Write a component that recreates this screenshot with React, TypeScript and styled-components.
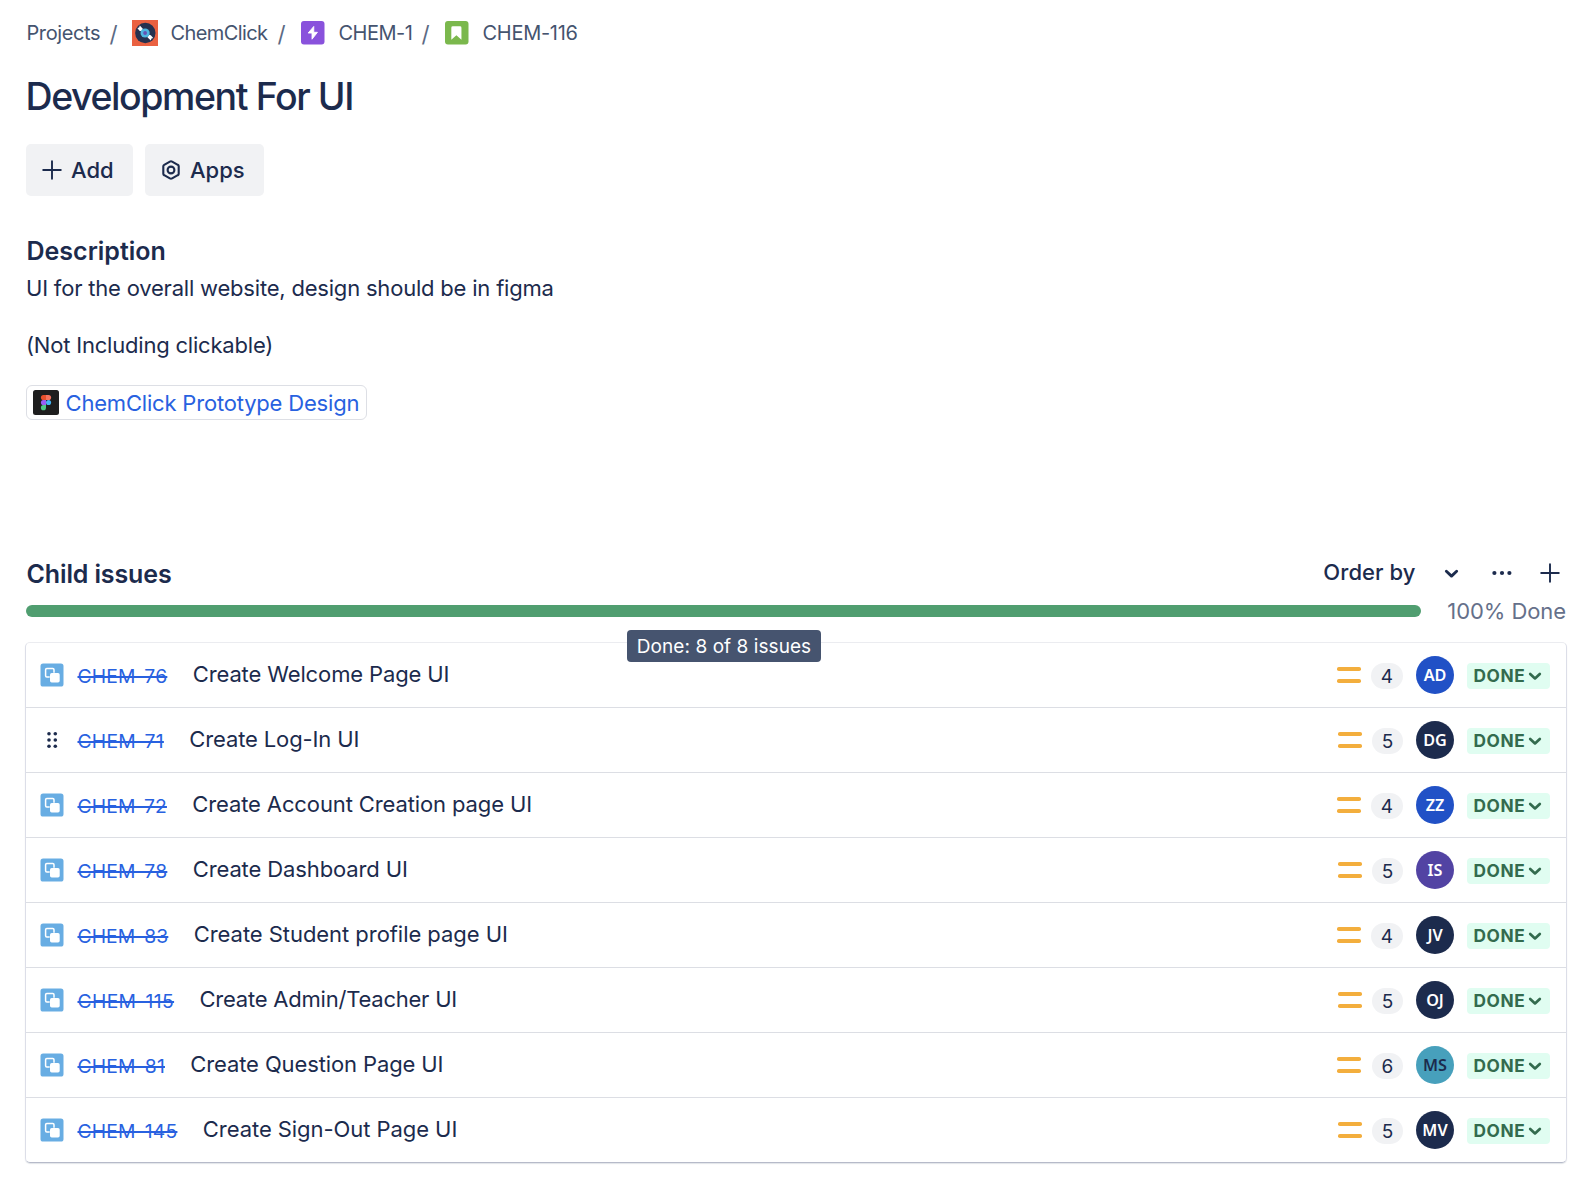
import React from "react";
import styled, { createGlobalStyle } from "styled-components";

const Global = createGlobalStyle`
  * { box-sizing: border-box; }
  body {
    margin: 0;
    background: #fff;
    color: #1c2b4d;
    font-family: Inter, "Liberation Sans", sans-serif;
    font-feature-settings: "calt" 0;
  }
  svg { display: block; flex: none; }
`;

const Page = styled.main`
  width: 1592px;
  height: 1184px;
  padding: 20px 26px 0;
  display: flex;
  flex-direction: column;
  overflow: hidden;
`;
const Crumbs = styled.nav`
  height: 26px;
  padding-left: 0.5px;
  display: flex;
  align-items: center;
  font-size: 20px;
  color: #45546f;
  white-space: nowrap;
`;
const Crumb = styled.a<{ $gap?: number }>`
  display: flex;
  align-items: center;
  gap: ${(p) => p.$gap ?? 0}px;
`;
const Label = styled.span<{ $tracking?: number }>`
  letter-spacing: ${(p) => p.$tracking ?? -0.4}px;
`;
const Slash = styled.span<{ $before: number; $after: number }>`
  width: 7px;
  margin: 1px ${(p) => p.$after}px 0 ${(p) => p.$before}px;
  color: #5c6a84;
  font-size: 22.5px;
`;
const Title = styled.h1`
  margin: 29px 0 0 -0.5px;
  font-size: 37.5px;
  line-height: 44px;
  font-weight: 530;
  letter-spacing: -1.42px;
`;
const Actions = styled.div`
  margin-top: 25px;
  display: flex;
  gap: 12px;
`;
const Action = styled.button<{ $w: number }>`
  width: ${(p) => p.$w}px;
  height: 52px;
  padding: 0 0 0 16px;
  display: flex;
  align-items: center;
  gap: 9px;
  border: 0;
  border-radius: 5px;
  background: #f1f2f4;
  color: inherit;
  font: 500 22px/28px Inter, sans-serif;
`;
const Section = styled.section<{ $top: number }>`
  margin-top: ${(p) => p.$top}px;
`;
const Heading = styled.h2`
  margin: 0 0 0 0.5px;
  font-size: 25px;
  line-height: 30px;
  font-weight: 600;
`;
const Para = styled.p<{ $top: number }>`
  margin: ${(p) => p.$top}px 0 0;
  font-size: 22px;
  line-height: 28px;
  letter-spacing: -0.2px;
`;
const SmartLink = styled.a`
  margin-top: 26px;
  width: 341px;
  height: 35px;
  padding: 0 6px;
  display: flex;
  align-items: center;
  gap: 6.5px;
  border: 1px solid #dddfe5;
  border-radius: 6px;
  color: #2861e0;
  font-size: 22px;
  letter-spacing: -0.19px;
  white-space: nowrap;
`;
const Head = styled.div`
  height: 32px;
  display: flex;
  align-items: center;
  justify-content: space-between;
  letter-spacing: -0.13px;
`;
const Tools = styled.div`
  height: 30px;
  align-self: flex-start;
  padding-right: 6px;
  display: flex;
  align-items: center;
  letter-spacing: 0.06px;
`;
const OrderBy = styled.span`
  padding-bottom: 2px;
  margin-right: 28px;
  font-size: 22px;
  font-weight: 500;
`;
const ToolIcon = styled.span<{ $before: number }>`
  margin-left: ${(p) => p.$before}px;
`;
const Progress = styled.div`
  position: relative;
  margin-top: 7px;
  height: 28px;
  display: flex;
  align-items: center;
  justify-content: space-between;
`;
const Bar = styled.div`
  width: 1395px;
  height: 12px;
  border-radius: 6px;
  background: #509e70;
`;
const Percent = styled.span`
  color: #65708a;
  font-size: 22px;
  letter-spacing: -0.08px;
`;
const Tooltip = styled.div`
  position: absolute;
  z-index: 2;
  left: 601px;
  top: 33px;
  width: 194px;
  height: 32px;
  display: flex;
  align-items: center;
  justify-content: center;
  border-radius: 4px;
  background: #46546f;
  color: #fff;
  font-size: 19px;
  letter-spacing: 0.06px;
  white-space: nowrap;
`;
const List = styled.div`
  margin: 17px -1px 0;
  border-radius: 5px;
  border: 1px solid #dcdee8;
  border-top-color: #ebecf0;
  border-bottom-color: #b6bac9;
  box-shadow: 0 1px 1px rgba(9, 30, 66, 0.12);
`;
const Row = styled.div`
  height: 65px;
  padding: 0 16px 0 14px;
  display: flex;
  align-items: center;
  border-bottom: 1px solid #dcdee4;
  &:last-child {
    height: 64px;
    border-bottom: 0;
  }
`;
const Key = styled.a<{ $tracking?: number }>`
  margin: 2px 0 0 13.5px;
  color: #2861e0;
  font-size: 19.3px;
  letter-spacing: ${(p) => p.$tracking ?? 0.2}px;
  text-decoration: line-through;
  text-decoration-thickness: 1.5px;
`;
const Name = styled.span<{ $tracking?: number }>`
  margin: 0 0 2px 25.4px;
  flex: 1;
  font-size: 22px;
  letter-spacing: ${(p) => p.$tracking ?? -0.12}px;
`;
const Badge = styled.span<{ $w: number; $before: number }>`
  width: ${(p) => p.$w}px;
  height: 26px;
  margin: 2px 13px 0 ${(p) => p.$before}px;
  border-radius: 13px;
  display: grid;
  place-items: center;
  background: #f1f2f4;
  font-size: 19px;
`;
const Avatar = styled.span<{ $bg: string; $fg?: string }>`
  width: 38px;
  height: 38px;
  border-radius: 50%;
  display: grid;
  place-items: center;
  background: ${(p) => p.$bg};
  color: ${(p) => p.$fg ?? "#fff"};
  font: 560 16.2px/20px "Noto Sans", sans-serif;
`;
const Status = styled.span`
  width: 83px;
  height: 26px;
  margin: 2px 0 0 13px;
  padding: 0 8px 0 6.5px;
  display: flex;
  align-items: center;
  justify-content: space-between;
  border-radius: 4px;
  background: #e0fdf1;
  color: #336b4e;
`;
const StatusText = styled.span`
  font-size: 17.3px;
  line-height: 22px;
  font-weight: 700;
  letter-spacing: 0.6px;
`;

const PlusIcon = () => (
  <svg width="20" height="20" viewBox="0 0 20 20" stroke="currentColor" strokeWidth="1.9" strokeLinecap="round">
    <path d="M10 1.2v17.6M1.2 10h17.6" />
  </svg>
);

const AppsIcon = () => (
  <svg width="20" height="20" viewBox="0 0 20 20" fill="none" stroke="currentColor" strokeWidth="2.1" strokeLinejoin="round">
    <path d="M8.9 1.6 3.2 4.8a1.7 1.7 0 0 0-.9 1.5v7.4c0 .6.3 1.2.9 1.5l5.7 3.2c.7.4 1.5.4 2.2 0l5.7-3.2c.6-.3.9-.9.9-1.5V6.3c0-.6-.3-1.2-.9-1.5l-5.7-3.2a2.2 2.2 0 0 0-2.2 0z" />
    <circle cx="10" cy="10" r="3.4" />
  </svg>
);

const ProjectLogo = () => (
  <svg width="26" height="26" viewBox="0 0 26 26">
    <rect width="26" height="26" fill="#ea6141" />
    <circle cx="13.3" cy="13" r="10.2" fill="#26314f" />
    <path d="M5.4 8 7.2 7.4 7.8 5.4 11 9 9.4 11.2 7.4 10.8z" fill="#fff" />
    <path d="M21.2 18 19.5 18.6 18.8 20.6 15.4 17.2 17 14.8 18.8 15.2z" fill="#fff" />
    <circle cx="13.1" cy="13" r="4.6" fill="#4fb6e0" />
    <circle cx="13.1" cy="13" r="1.9" fill="#6553b4" />
  </svg>
);

const EpicIcon = () => (
  <svg width="23.5" height="23.5" viewBox="0 0 16 16">
    <rect width="16" height="16" rx="2" fill="#8952dc" />
    <path d="M8.7 3.7 4.9 8.2h2.6v4.2l3.7-4.7H8.7z" fill="#fff" stroke="#fff" strokeWidth="0.6" strokeLinejoin="round" />
  </svg>
);

const StoryIcon = () => (
  <svg width="23.5" height="23.5" viewBox="0 0 16 16">
    <rect width="16" height="16" rx="2" fill="#7bb84d" />
    <path d="M5.3 3.6h4.9a1 1 0 0 1 1 1v8.1L7.75 9.7 4.3 12.7V4.6a1 1 0 0 1 1-1z" fill="#fff" />
  </svg>
);

const FigmaIcon = () => (
  <svg width="26" height="25" viewBox="0 0 26 25">
    <rect width="26" height="25" rx="2.5" fill="#1e1e1e" />
    <g transform="translate(7.9 4.9)">
      <path d="M5.1 0H2.55a2.55 2.55 0 0 0 0 5.1H5.1z" fill="#e8502c" />
      <path d="M5.1 0h2.55a2.55 2.55 0 0 1 0 5.1H5.1z" fill="#f5745f" />
      <path d="M5.1 5.1H2.55a2.55 2.55 0 0 0 0 5.1H5.1z" fill="#9b5cf5" />
      <circle cx="7.65" cy="7.65" r="2.55" fill="#43b4f5" />
      <path d="M2.55 10.2H5.1v2.55a2.55 2.55 0 1 1-2.55-2.55z" fill="#4fc985" />
    </g>
  </svg>
);

const SubtaskIcon = () => (
  <svg width="24" height="24" viewBox="0 0 24 24">
    <rect x="0.5" y="0.4" width="23" height="23.2" rx="2.6" fill="#68ade3" />
    <rect x="5.6" y="5.6" width="8.4" height="8.4" rx="1.2" fill="none" stroke="#fff" strokeWidth="1.5" />
    <rect x="9.7" y="9.7" width="10.2" height="10.2" rx="2" fill="#68ade3" />
    <rect x="10" y="10" width="9.7" height="9.4" rx="1.7" fill="#fff" />
  </svg>
);

const DragHandle = () => (
  <svg width="24" height="24" viewBox="0 0 24 24" fill="currentColor">
    {[5.8, 12, 18.2].map((y) => (
      <g key={y}>
        <circle cx="9" cy={y} r="1.8" />
        <circle cx="15.3" cy={y} r="1.8" />
      </g>
    ))}
  </svg>
);

const PriorityIcon = () => (
  <svg width="24" height="16" viewBox="0 0 24 16" fill="#f3ae3d">
    <rect y="0" width="24" height="4" rx="1.8" />
    <rect y="12" width="24" height="4" rx="1.8" />
  </svg>
);

const Chevron = ({ size = 15 }: { size?: number }) => (
  <svg width={size} height={size} viewBox="0 0 14 14" fill="none" stroke="currentColor" strokeWidth="2.7" strokeLinecap="round" strokeLinejoin="round">
    <path d="M2.2 4.9 7 9.4l4.8-4.5" />
  </svg>
);

const MoreIcon = () => (
  <svg width="20" height="20" viewBox="0 0 20 20" fill="currentColor">
    <circle cx="2.4" cy="10" r="2.1" />
    <circle cx="10" cy="10" r="2.1" />
    <circle cx="17.4" cy="10" r="2.1" />
  </svg>
);

interface Issue {
  id: string;
  name: string;
  points: number;
  who: string;
  bg: string;
  fg?: string;
  hovered?: boolean;
  keyTracking?: number;
  nameTracking?: number;
}

const issues: Issue[] = [
  { id: "CHEM-76", name: "Create Welcome Page UI", points: 4, who: "AD", bg: "#2151c6" },
  { id: "CHEM-71", name: "Create Log-In UI", points: 5, who: "DG", bg: "#1c2b4d", hovered: true, keyTracking: 0.25 },
  { id: "CHEM-72", name: "Create Account Creation page UI", points: 4, who: "ZZ", bg: "#2151c6", keyTracking: 0.13 },
  { id: "CHEM-78", name: "Create Dashboard UI", points: 5, who: "IS", bg: "#5243a3" },
  { id: "CHEM-83", name: "Create Student profile page UI", points: 4, who: "JV", bg: "#1c2b4d", keyTracking: 0.1, nameTracking: -0.05 },
  { id: "CHEM-115", name: "Create Admin/Teacher UI", points: 5, who: "OJ", bg: "#1c2b4d", keyTracking: 0.36, nameTracking: -0.22 },
  { id: "CHEM-81", name: "Create Question Page UI", points: 6, who: "MS", bg: "#47a0bc", fg: "#1c2b4d" },
  { id: "CHEM-145", name: "Create Sign-Out Page UI", points: 5, who: "MV", bg: "#1c2b4d", nameTracking: -0.06 },
];

export default function App() {
  return (
    <>
      <Global />
      <Page>
        <Crumbs>
          <Crumb><Label>Projects</Label></Crumb>
          <Slash $before={9.5} $after={15.5}>/</Slash>
          <Crumb $gap={12.4}><ProjectLogo /><Label $tracking={-0.6}>ChemClick</Label></Crumb>
          <Slash $before={10} $after={16.8}>/</Slash>
          <Crumb $gap={13.7}><EpicIcon /><Label $tracking={-0.5}>CHEM-1</Label></Crumb>
          <Slash $before={9.3} $after={16.5}>/</Slash>
          <Crumb $gap={13.9}><StoryIcon /><Label $tracking={-0.28}>CHEM-116</Label></Crumb>
        </Crumbs>
        <Title>Development For UI</Title>
        <Actions>
          <Action $w={107}><PlusIcon />Add</Action>
          <Action $w={119}><AppsIcon />Apps</Action>
        </Actions>
        <Section $top={40}>
          <Heading>Description</Heading>
          <Para $top={8}>UI for the overall website, design should be in figma</Para>
          <Para $top={29}>(Not Including clickable)</Para>
          <SmartLink><FigmaIcon />ChemClick Prototype Design</SmartLink>
        </Section>
        <Section $top={138}>
          <Head>
            <Heading>Child issues</Heading>
            <Tools>
              <OrderBy>Order by</OrderBy>
              <Chevron />
              <ToolIcon $before={33.5}><MoreIcon /></ToolIcon>
              <ToolIcon $before={28}><PlusIcon /></ToolIcon>
            </Tools>
          </Head>
          <Progress>
            <Bar />
            <Percent>100% Done</Percent>
            <Tooltip>Done: 8 of 8 issues</Tooltip>
          </Progress>
          <List>
            {issues.map((it) => (
              <Row key={it.id}>
                {it.hovered ? <DragHandle /> : <SubtaskIcon />}
                <Key $tracking={it.keyTracking}>{it.id}</Key>
                <Name $tracking={it.nameTracking}>{it.name}</Name>
                <PriorityIcon />
                <Badge $w={it.points === 4 ? 32 : 31} $before={it.points === 6 ? 11 : 10}>{it.points}</Badge>
                <Avatar $bg={it.bg} $fg={it.fg}>{it.who}</Avatar>
                <Status><StatusText>DONE</StatusText><Chevron size={14} /></Status>
              </Row>
            ))}
          </List>
        </Section>
      </Page>
    </>
  );
}
